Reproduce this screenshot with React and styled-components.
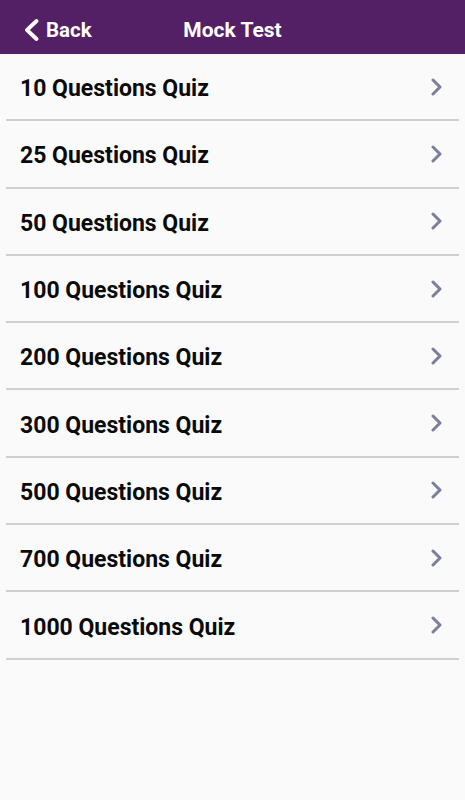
import React from 'react'
import styled, { createGlobalStyle } from 'styled-components'

const quizzes = [10, 25, 50, 100, 200, 300, 500, 700, 1000]

const GlobalStyle = createGlobalStyle`
  html, body {
    margin: 0;
    padding: 0;
    background: #fafafa;
    font-family: Roboto, "Noto Sans", sans-serif;
  }
`

const Page = styled.div`
  width: 465px;
  min-height: 800px;
  background: #fafafa;
`

const Header = styled.header`
  height: 54px;
  box-sizing: border-box;
  padding-top: 6px;
  background: #532066;
  display: grid;
  grid-template-columns: 1fr auto 1fr;
  align-items: center;
  color: #fff;
`

const BackButton = styled.button`
  justify-self: start;
  display: flex;
  align-items: center;
  gap: 7px;
  margin-left: 24px;
  padding: 0;
  border: 0;
  background: none;
  color: #fff;
  font-family: Roboto, sans-serif;
  font-weight: 700;
  font-size: 20.5px;
  cursor: pointer;
`

const Title = styled.h1`
  margin: 0;
  font-size: 21px;
  font-weight: 700;
`

const List = styled.ul`
  list-style: none;
  margin: 0;
  padding: 0;
`

const Row = styled.li`
  height: 65.3px;
  display: flex;
  align-items: center;
  justify-content: space-between;
  margin: 0 6px;
  padding: 0 17px 0 14px;
  border-bottom: 2px solid #cfcfcf;
  cursor: pointer;
`

const Label = styled.span`
  font-size: 23px;
  font-weight: 700;
  color: #0a0a0a;
  margin-top: 4px;
`

const Chevron = ({ color = '#7d7d9d' }) => (
  <svg width="11" height="18" viewBox="0 0 11 18" fill="none">
    <path d="M2 2 L9 9 L2 16" stroke={color} strokeWidth="3" strokeLinecap="round" strokeLinejoin="round" />
  </svg>
)

const BackChevron = () => (
  <svg width="15" height="22" viewBox="0 0 15 22" fill="none">
    <path d="M12.5 2 L3 11 L12.5 20" stroke="#fff" strokeWidth="3.8" strokeLinecap="round" strokeLinejoin="round" />
  </svg>
)

export default function App() {
  return (
    <Page>
      <GlobalStyle />
      <Header>
        <BackButton>
          <BackChevron />
          Back
        </BackButton>
        <Title>Mock Test</Title>
        <span />
      </Header>
      <List>
        {quizzes.map((n) => (
          <Row key={n}>
            <Label>{n} Questions Quiz</Label>
            <Chevron />
          </Row>
        ))}
      </List>
    </Page>
  )
}
